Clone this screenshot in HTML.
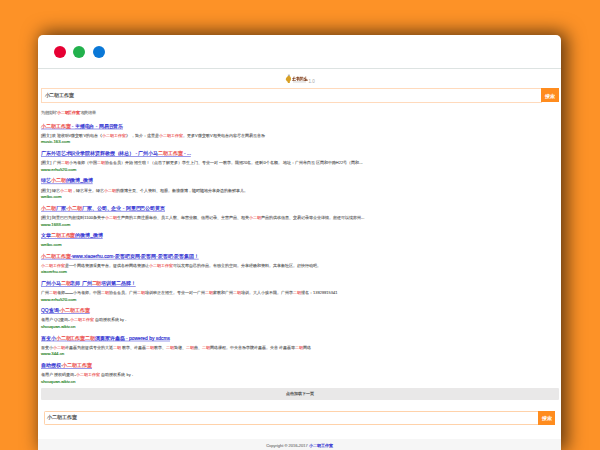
<!DOCTYPE html>
<html><head><meta charset="utf-8"><title>search</title>
<style>
html,body{margin:0;padding:0;}
html{width:600px;height:450px;overflow:hidden;}
body{width:600px;height:450px;overflow:hidden;background:#fd9227;position:relative;font-family:"Liberation Sans",sans-serif;}
#win{position:absolute;left:38px;top:35px;width:523px;height:415px;background:#fff;border-radius:5px 5px 0 0;box-shadow:4px -1px 18px 2px rgba(0,0,0,0.62);}
.dot{position:absolute;top:46px;width:12px;height:12px;border-radius:50%;}
#sep{position:absolute;left:38px;top:68px;width:523px;height:1px;background:#dde3e2;}
#txt{position:absolute;left:0;top:0;width:6000px;height:4500px;transform:scale(0.1);transform-origin:0 0;}
.l{position:absolute;white-space:nowrap;overflow:visible;-webkit-text-stroke:1.6px currentColor;}
.j{text-align:justify;text-align-last:justify;}
.t{font-size:49.2px;color:#2a2ad0;}
.t u{text-decoration:none;display:block;background:linear-gradient(rgba(40,40,210,0.8),rgba(40,40,210,0.8)) no-repeat 0 62.5px/100% 6.0px;}
.d{font-size:40.0px;color:#505050;-webkit-text-stroke-width:0.8px;}
.u{font-size:43.1px;color:#2a852a;-webkit-text-stroke-width:1.5px;}
.i{font-size:36.9px;color:#8a8a8a;}
.s{font-size:49.2px;color:#444;}
.bt{font-size:49.2px;color:#fff;text-align:center;}
.m{font-size:40.0px;color:#555;text-align:center;}
.f{font-size:40.0px;color:#888;text-align:center;}
.f span{color:#2a2ad0;}
b{font-weight:normal;color:#ea3a3a;}
.sb{position:absolute;box-sizing:border-box;background:#fff;}
.btn{position:absolute;background:#ff8c1e;}
#more{position:absolute;left:41px;top:388px;width:517.5px;height:11.7px;background:#e9e8e8;border-radius:1px;}
#foot{position:absolute;left:38px;top:439px;width:523px;height:11px;background:#f6f6f6;}
</style></head><body>
<div id="win"></div>
<div class="dot" style="left:54px;background:#e60033;"></div>
<div class="dot" style="left:73px;background:#22b14c;"></div>
<div class="dot" style="left:93px;background:#0a78d7;"></div>
<div id="sep"></div>
<svg style="position:absolute;left:284px;top:73px;" width="32" height="12" viewBox="0 0 32 12">
<rect x="3.9" y="1.6" width="2" height="1.6" fill="#9a9a9a" opacity="0.75"/>
<path d="M1.7 6.2 C2.2 4.5 3.5 3.2 4.6 2.8 C5.8 2.8 6.8 3.8 7 5.5 C7 7 6.5 8 5.8 8.6 L5.8 10 L3.8 10 L3.8 8.8 C2.8 8.4 2 7.4 1.7 6.2 Z" fill="#d8a024"/>
<g fill="none" stroke="#7a3510" stroke-width="0.7" stroke-linecap="round">
<path d="M10 3.9 L9.2 7.4 M8.7 5.5 L11.4 5.3 M8.7 7.4 L11.5 7.4"/>
<path d="M12.5 4.6 L15 4.4 M13.7 3.9 L13.5 7.5 M12.5 6.2 L15.2 6 M14.8 5 L15.2 7.5"/>
<path d="M16.3 4.3 L19 4.3 L19 7.4 M16.3 4.3 L16.3 7.5 M17.6 4.9 L17.6 6.9"/>
<path d="M21.5 3.9 L20.2 6 L23.2 6.8 M21.8 5 L21.6 7.6 M20.1 7.5 L23.2 7.5"/>
</g>
<rect x="9" y="8.4" width="13" height="1.1" fill="#c8c8c8" opacity="0.7"/>
<text x="24.4" y="9.6" font-family="Liberation Sans, sans-serif" font-size="4.6" fill="#a8a8a8">1.0</text>
</svg>
<div class="sb" style="left:41px;top:88px;width:501px;height:14.5px;border:1px solid #ffdabc;"></div>
<div class="btn" style="left:541px;top:88px;width:17.5px;height:14px;"></div>
<div id="more"></div>
<div class="sb" style="left:43.8px;top:410.5px;width:496px;height:14.2px;border:1px solid #ffd2aa;border-radius:1.2px;"></div>
<div class="btn" style="left:538.3px;top:410.5px;width:17px;height:14.2px;"></div>
<div id="foot"></div>
<div id="txt">
<div class="l s j" style="left:445.0px;top:921.0px;height:70.0px;line-height:70.0px;width:295.0px;">小二胡工作室</div>
<div class="l bt" style="left:5410.0px;top:925.0px;height:70.0px;line-height:70.0px;width:175.0px;">搜索</div>
<div class="l i j" style="left:410.0px;top:1102.0px;height:60.0px;line-height:60.0px;width:540.0px;">为您找到&quot;<b>小二胡工作室</b>&quot;相关结果</div>
<div class="l t j" style="left:410.0px;top:1224.0px;height:70.0px;line-height:70.0px;width:820.0px;"><u><b>小二胡工作室</b> - 主播电台 - 网易云音乐</u></div>
<div class="l d j" style="left:410.0px;top:1323.0px;height:60.0px;line-height:60.0px;width:2240.0px;">[图文] 欢迎收听V微交歌V的电台《<b>小二胡工作室</b>》，简介：这里是<b>小二胡工作室</b>。更多V微交歌V相关电台内容尽在网易云音乐</div>
<div class="l u" style="left:410.0px;top:1388.0px;height:60.0px;line-height:60.0px;">music.163.com</div>
<div class="l t j" style="left:410.0px;top:1497.0px;height:70.0px;line-height:70.0px;width:1498.0px;"><u>广东外语艺术职业学院林贤辉教授（林总） - 广州小马<b>二胡工作室</b> - ...</u></div>
<div class="l d j" style="left:410.0px;top:1596.0px;height:60.0px;line-height:60.0px;width:3217.0px;">[图文] 广州<b>二胡</b>小马老师（中国<b>二胡</b>协会会员）开始招生啦！（点击了解更多）学生上门、专业一对一教学。限招20名。还剩0个名额。 地址：广州市白云区同和中路H22号（同和...</div>
<div class="l u" style="left:410.0px;top:1661.0px;height:60.0px;line-height:60.0px;">www.erhu520.com</div>
<div class="l t j" style="left:410.0px;top:1772.0px;height:70.0px;line-height:70.0px;width:517.0px;"><u>绿艺<b>小二胡</b>的微博_微博</u></div>
<div class="l d j" style="left:410.0px;top:1871.0px;height:60.0px;line-height:60.0px;width:2067.0px;">[图文] 绿艺<b>小二胡</b>，绿艺琴主。绿艺<b>小二胡</b>的微博主页、个人资料、相册。新浪微博，随时随地分享身边的新鲜事儿。</div>
<div class="l u" style="left:410.0px;top:1936.0px;height:60.0px;line-height:60.0px;">weibo.com</div>
<div class="l t j" style="left:410.0px;top:2046.0px;height:70.0px;line-height:70.0px;width:1240.0px;"><u><b>小二胡</b>厂家-<b>小二胡</b>厂家、公司、企业 - 阿里巴巴公司黄页</u></div>
<div class="l d j" style="left:410.0px;top:2145.0px;height:60.0px;line-height:60.0px;width:3220.0px;">[图文] 阿里巴巴为您找到1100条关于<b>小二胡</b>生产商的工商注册年份、员工人数、年营业额、信用记录、主营产品、相关<b>小二胡</b>产品的供求信息、交易记录等企业详情。您还可以找苏州...</div>
<div class="l u" style="left:410.0px;top:2210.0px;height:60.0px;line-height:60.0px;">www.1688.com</div>
<div class="l t j" style="left:410.0px;top:2319.0px;height:70.0px;line-height:70.0px;width:617.0px;"><u>文章<b>二胡工作室</b>的微博_微博</u></div>
<div class="l u" style="left:410.0px;top:2410.0px;height:60.0px;line-height:60.0px;">weibo.com</div>
<div class="l t j" style="left:410.0px;top:2525.0px;height:70.0px;line-height:70.0px;width:1577.0px;"><u><b>小二胡工作室</b>-www.xiaoerhu.com-爱客吧资网-爱客网-爱客吧-爱客集团！</u></div>
<div class="l d j" style="left:410.0px;top:2624.0px;height:60.0px;line-height:60.0px;width:2740.0px;"><b>小二胡工作室</b>是一个网络资源采集平台。提供各种网络资源让<b>小二胡工作室</b>可以发布自己的作品。有独立的空间。分享经验和资料。共享新社区。赶快行动吧。</div>
<div class="l u" style="left:410.0px;top:2689.0px;height:60.0px;line-height:60.0px;">xiaoerhu.com</div>
<div class="l t j" style="left:410.0px;top:2798.0px;height:70.0px;line-height:70.0px;width:947.0px;"><u>广州小马<b>二胡</b>老师 广州<b>二胡</b>培训第二品牌！</u></div>
<div class="l d j" style="left:410.0px;top:2897.0px;height:60.0px;line-height:60.0px;width:2960.0px;">广州<b>二胡</b>老师——小马老师。中国<b>二胡</b>协会会员。广州<b>二胡</b>培训班正在招生。专业一对一广州<b>二胡</b>家教和广州<b>二胡</b>培训。大人小孩不限。广州学<b>二胡</b>报名：13928915341</div>
<div class="l u" style="left:410.0px;top:2962.0px;height:60.0px;line-height:60.0px;">www.erhu520.com</div>
<div class="l t j" style="left:410.0px;top:3071.0px;height:70.0px;line-height:70.0px;width:487.0px;"><u>QQ查询-<b>小二胡工作室</b></u></div>
<div class="l d j" style="left:410.0px;top:3170.0px;height:60.0px;line-height:60.0px;width:840.0px;">老用户 QQ查询-<b>小二胡工作室</b> 自助授权系统 by .</div>
<div class="l u" style="left:410.0px;top:3235.0px;height:60.0px;line-height:60.0px;">shouquan.aiktv.cn</div>
<div class="l t j" style="left:410.0px;top:3344.0px;height:70.0px;line-height:70.0px;width:1290.0px;"><u>百变小<b>小二胡工作室</b><b>二胡</b>演奏家许鑫磊 - powered by sdcms</u></div>
<div class="l d j" style="left:410.0px;top:3443.0px;height:60.0px;line-height:60.0px;width:2697.0px;">百变小<b>小二胡</b>许鑫磊为您提供专业的大返<b>二胡</b>教学、许鑫磊<b>二胡</b>教学、<b>二胡</b>简谱、<b>二胡</b>曲、<b>二胡</b>网络课程。中央音乐学院许鑫磊。央音许鑫磊等<b>二胡</b>网络</div>
<div class="l u" style="left:410.0px;top:3508.0px;height:60.0px;line-height:60.0px;">www.344.cn</div>
<div class="l t j" style="left:410.0px;top:3617.0px;height:70.0px;line-height:70.0px;width:510.0px;"><u>自助授权-<b>小二胡工作室</b></u></div>
<div class="l d j" style="left:410.0px;top:3716.0px;height:60.0px;line-height:60.0px;width:920.0px;">老用户 授权码查询-<b>小二胡工作室</b> 自助授权系统 by .</div>
<div class="l u" style="left:410.0px;top:3781.0px;height:60.0px;line-height:60.0px;">shouquan.aiktv.cn</div>
<div class="l m" style="left:410.0px;top:3906.0px;height:60.0px;line-height:60.0px;width:5175.0px;">点击加载下一页</div>
<div class="l s j" style="left:473.0px;top:4141.0px;height:70.0px;line-height:70.0px;width:295.0px;">小二胡工作室</div>
<div class="l bt" style="left:5383.0px;top:4144.0px;height:70.0px;line-height:70.0px;width:170.0px;">搜索</div>
<div class="l f" style="left:380.0px;top:4422.0px;height:60.0px;line-height:60.0px;width:5230.0px;">Copyright &copy; 2016-2017 <span>小二胡工作室</span></div>
</div>
</body></html>
